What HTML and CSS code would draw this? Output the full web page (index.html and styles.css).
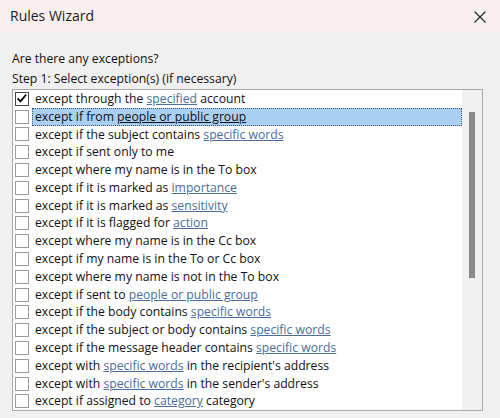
FILE: index.html
```html
<!DOCTYPE html>
<html>
<head>
<meta charset="utf-8">
<link rel="stylesheet" href="styles.css">
</head>
<body>
<div class="window">
  <div class="titlebar">
    <span class="title">Rules Wizard</span>
    <svg class="close" width="12" height="12" viewBox="0 0 12 12"><path d="M0.5 0.5 L11.5 11.5 M11.5 0.5 L0.5 11.5" stroke="#222" stroke-width="1.1" fill="none"/></svg>
  </div>
  <div class="content">
    <div class="question">Are there any exceptions?</div>
    <div class="step">Step 1: Select exception(s) (if necessary)</div>
    <div class="listbox">
      <div class="items">
        <div class="row"><span class="cb checked"><svg width="13" height="13" viewBox="0 0 13 13"><path d="M1.8 6.3 L4.8 9.6 L11 2.3" stroke="#000" stroke-width="1.9" fill="none"/></svg></span><span class="txt">except through the <a>specified</a> account</span></div>
        <div class="row sel"><span class="cb"></span><span class="txt">except if from <a>people or public group</a></span></div>
        <div class="row"><span class="cb"></span><span class="txt">except if the subject contains <a>specific words</a></span></div>
        <div class="row"><span class="cb"></span><span class="txt">except if sent only to me</span></div>
        <div class="row"><span class="cb"></span><span class="txt">except where my name is in the To box</span></div>
        <div class="row"><span class="cb"></span><span class="txt">except if it is marked as <a>importance</a></span></div>
        <div class="row"><span class="cb"></span><span class="txt">except if it is marked as <a>sensitivity</a></span></div>
        <div class="row"><span class="cb"></span><span class="txt">except if it is flagged for <a>action</a></span></div>
        <div class="row"><span class="cb"></span><span class="txt">except where my name is in the Cc box</span></div>
        <div class="row"><span class="cb"></span><span class="txt">except if my name is in the To or Cc box</span></div>
        <div class="row"><span class="cb"></span><span class="txt">except where my name is not in the To box</span></div>
        <div class="row"><span class="cb"></span><span class="txt">except if sent to <a>people or public group</a></span></div>
        <div class="row"><span class="cb"></span><span class="txt">except if the body contains <a>specific words</a></span></div>
        <div class="row"><span class="cb"></span><span class="txt">except if the subject or body contains <a>specific words</a></span></div>
        <div class="row"><span class="cb"></span><span class="txt">except if the message header contains <a>specific words</a></span></div>
        <div class="row"><span class="cb"></span><span class="txt">except with <a>specific words</a> in the recipient's address</span></div>
        <div class="row"><span class="cb"></span><span class="txt">except with <a>specific words</a> in the sender's address</span></div>
        <div class="row"><span class="cb"></span><span class="txt">except if assigned to <a>category</a> category</span></div>
      </div>
      <div class="scrollbar"><div class="thumb"></div></div>
    </div>
  </div>
</div>
</body>
</html>
```

FILE: styles.css
```css
html, body {
  margin: 0;
  padding: 0;
  background: #f0f0f0;
}
body {
  width: 500px;
  height: 418px;
  overflow: hidden;
  font-family: "Open Sans", "Noto Sans", sans-serif;
  color: #111;
}
.window {
  display: flex;
  flex-direction: column;
}
.titlebar {
  height: 33px;
  background: #f9efee;
  display: flex;
  align-items: center;
  justify-content: space-between;
  padding: 0 14px 0 10px;
}
.title {
  font-size: 14px;
  color: #1b1b1b;
  position: relative;
  top: -1px;
}
.close {
  display: block;
}
.content {
  padding: 16px 17px 0 12px;
}
.question {
  font-size: 12.2px;
  line-height: 20px;
  height: 20px;
}
.step {
  font-size: 12.2px;
  line-height: 20px;
  height: 20px;
}
.listbox {
  height: 320px;
  border: 1px solid #a8a8a8;
  background: #ffffff;
  display: flex;
}
.items {
  flex: 1;
  padding-left: 2px;
}
.row {
  height: 17.8px;
  display: flex;
  align-items: center;
  font-size: 12.2px;
  white-space: nowrap;
}
.cb {
  width: 14px;
  height: 14px;
  border: 1px solid #9a9a9a;
  background: #fff;
  box-sizing: border-box;
  flex: none;
  display: flex;
  align-items: center;
  justify-content: center;
  margin-right: 3px;
}
.cb.checked {
  border-color: #444;
}
.cb svg {
  display: block;
}
.txt {
  padding: 0 2px;
  line-height: 16px;
  flex: 1;
  border: 1px dotted transparent;
}
.row.sel .txt {
  background: #a9d0f3;
  border: 1px dotted #44546a;
}
a {
  color: #4a6d99;
  text-decoration: underline;
}
.row.sel a {
  color: #111;
}
.scrollbar {
  width: 20px;
  background: #f0f0f0;
  flex: none;
  display: flex;
  justify-content: center;
  padding-top: 22px;
  box-sizing: border-box;
}
.thumb {
  width: 6px;
  height: 166px;
  background: #8a8a8a;
}
```
